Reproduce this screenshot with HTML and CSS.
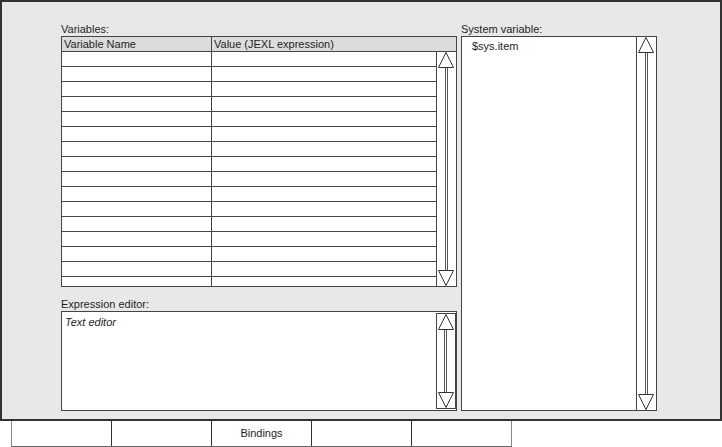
FILE: index.html
```html
<!DOCTYPE html>
<html>
<head>
<meta charset="utf-8">
<link rel="stylesheet" href="styles.css">
</head>
<body>
<div class="panel">
  <div class="left">
    <div class="label">Variables:</div>
    <div class="table">
      <div class="thead">
        <div class="th c1">Variable Name</div>
        <div class="th c2">Value (JEXL expression)</div>
      </div>
      <div class="tbody">
        <div class="rows">
          <div class="row"><div class="td c1"></div><div class="td c2"></div></div>
          <div class="row"><div class="td c1"></div><div class="td c2"></div></div>
          <div class="row"><div class="td c1"></div><div class="td c2"></div></div>
          <div class="row"><div class="td c1"></div><div class="td c2"></div></div>
          <div class="row"><div class="td c1"></div><div class="td c2"></div></div>
          <div class="row"><div class="td c1"></div><div class="td c2"></div></div>
          <div class="row"><div class="td c1"></div><div class="td c2"></div></div>
          <div class="row"><div class="td c1"></div><div class="td c2"></div></div>
          <div class="row"><div class="td c1"></div><div class="td c2"></div></div>
          <div class="row"><div class="td c1"></div><div class="td c2"></div></div>
          <div class="row"><div class="td c1"></div><div class="td c2"></div></div>
          <div class="row"><div class="td c1"></div><div class="td c2"></div></div>
          <div class="row"><div class="td c1"></div><div class="td c2"></div></div>
          <div class="row"><div class="td c1"></div><div class="td c2"></div></div>
          <div class="row"><div class="td c1"></div><div class="td c2"></div></div>
          <div class="row"><div class="td c1"></div><div class="td c2"></div></div>
        </div>
        <div class="scroll">
          <svg class="arrow" width="19" height="16" viewBox="0 0 19 16"><polygon points="1.5,15.5 9,0.5 16.5,15.5" /></svg>
          <div class="shaft"></div>
          <svg class="arrow" width="19" height="16" viewBox="0 0 19 16"><polygon points="1.5,0.5 9,15.5 16.5,0.5" /></svg>
        </div>
      </div>
    </div>
    <div class="label label-expr">Expression editor:</div>
    <div class="editor">
      <div class="editor-text">Text editor</div>
      <div class="scroll scroll-boxed">
        <svg class="arrow" width="18" height="16" viewBox="0 0 18 16"><polygon points="1.5,15.5 9,0.5 16.5,15.5" /></svg>
        <div class="shaft"></div>
        <svg class="arrow" width="18" height="16" viewBox="0 0 18 16"><polygon points="1.5,0.5 9,15.5 16.5,0.5" /></svg>
      </div>
    </div>
  </div>
  <div class="right">
    <div class="label">System variable:</div>
    <div class="sysbox">
      <div class="sys-list">
        <div class="sys-item">$sys.item</div>
      </div>
      <div class="scroll">
        <svg class="arrow" width="19" height="16" viewBox="0 0 19 16"><polygon points="1.5,15.5 9,0.5 16.5,15.5" /></svg>
        <div class="shaft"></div>
        <svg class="arrow" width="19" height="16" viewBox="0 0 19 16"><polygon points="1.5,0.5 9,15.5 16.5,0.5" /></svg>
      </div>
    </div>
  </div>
</div>
<div class="tabs">
  <div class="tab"></div>
  <div class="tab"></div>
  <div class="tab">Bindings</div>
  <div class="tab"></div>
  <div class="tab tab-last"></div>
</div>
</body>
</html>
```

FILE: styles.css
```css
html, body {
  margin: 0;
  padding: 0;
  background: #ffffff;
}
body {
  font-family: "Liberation Sans", Arial, sans-serif;
  font-size: 11px;
  color: #1e1e1e;
  width: 722px;
  height: 447px;
  overflow: hidden;
}
.panel {
  box-sizing: border-box;
  width: 722px;
  height: 421px;
  border: 2px solid #333333;
  background: #e8e8e8;
  padding: 20px 0 0 59px;
  display: flex;
  gap: 4px;
}
.left {
  width: 396px;
  display: flex;
  flex-direction: column;
}
.right {
  width: 196px;
  display: flex;
  flex-direction: column;
}
.label {
  height: 14px;
  line-height: 14px;
  white-space: nowrap;
}
.label-expr {
  margin-top: 10px;
}
.table {
  box-sizing: border-box;
  height: 251px;
  border: 1px solid #444444;
  background: #ffffff;
  display: flex;
  flex-direction: column;
}
.thead {
  display: flex;
  height: 14px;
  border-bottom: 1px solid #444444;
  background: #dcdcdc;
}
.th {
  line-height: 14px;
  padding-left: 2px;
  box-sizing: border-box;
  white-space: nowrap;
}
.c1 {
  width: 150px;
  border-right: 1px solid #444444;
  box-sizing: border-box;
  flex: none;
}
.c2 {
  flex: 1;
}
.tbody {
  flex: 1;
  display: flex;
  overflow: hidden;
}
.rows {
  width: 374px;
  overflow: hidden;
}
.row {
  display: flex;
  height: 14px;
  border-bottom: 1px solid #444444;
}
.td {
  height: 14px;
}
.scroll {
  box-sizing: border-box;
  width: 20px;
  border-left: 1px solid #444444;
  display: flex;
  flex-direction: column;
  background: #ffffff;
}
.arrow {
  display: block;
  flex: none;
}
.arrow polygon {
  fill: #ffffff;
  stroke: #333333;
  stroke-width: 1;
}
.shaft {
  flex: 1;
  width: 1px;
  margin-left: 8px;
  border-left: 1px solid #555555;
  border-right: 1px solid #555555;
}
.scroll-boxed {
  border: 1px solid #444444;
  margin: 1px 0 1px 0;
}
.scroll-boxed .shaft {
  margin-left: 7px;
}
.editor {
  box-sizing: border-box;
  height: 100px;
  border: 1px solid #444444;
  background: #ffffff;
  display: flex;
}
.editor-text {
  flex: 1;
  font-style: italic;
  line-height: 14px;
  padding: 3px 0 0 3px;
}
.sysbox {
  box-sizing: border-box;
  height: 375px;
  border: 1px solid #444444;
  background: #ffffff;
  display: flex;
}
.sys-list {
  flex: 1;
  padding: 2px 0 0 10px;
}
.sys-item {
  line-height: 14px;
}
.tabs {
  margin-left: 11px;
  width: 501px;
  box-sizing: border-box;
  height: 26px;
  display: flex;
  border-left: 1px solid #888888;
  border-right: 1px solid #888888;
  border-bottom: 1px solid #666666;
  background: #ffffff;
}
.tab {
  box-sizing: border-box;
  width: 100px;
  height: 25px;
  line-height: 25px;
  text-align: center;
  border-right: 1px solid #333333;
  flex: none;
}
.tab-last {
  width: 99px;
  border-right: none;
}
```
